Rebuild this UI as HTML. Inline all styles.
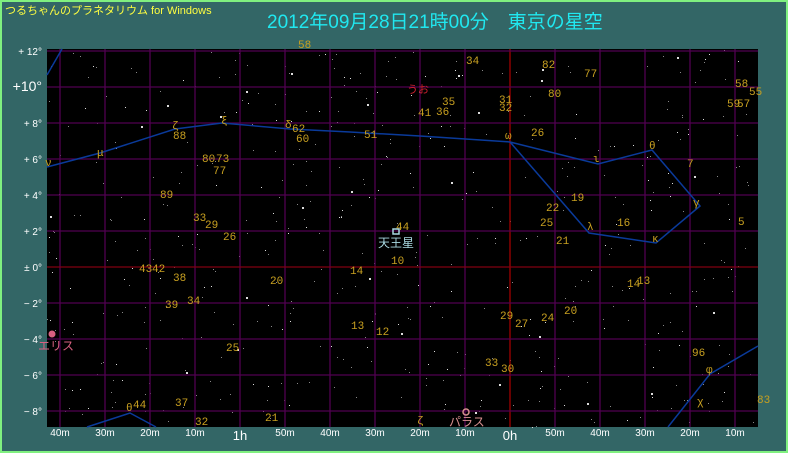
<!DOCTYPE html>
<html><head><meta charset="utf-8"><style>
html,body{margin:0;padding:0;}
body{width:788px;height:453px;overflow:hidden;background:#336666;font-family:"Liberation Sans","Noto Sans CJK JP",sans-serif;}
#wrap{position:absolute;left:0;top:0;width:784px;height:449px;border:2px solid #80f080;background:#336666;}
svg{position:absolute;left:0;top:0;}
</style></head><body>
<div id="wrap"></div>
<svg width="788" height="453" viewBox="0 0 788 453" font-family="Liberation Sans, Noto Sans CJK JP, sans-serif">
<text x="5" y="14" fill="#ffff40" font-size="11">つるちゃんのプラネタリウム for Windows</text>
<text x="267" y="28" fill="#20e8f0" font-size="19">2012年09月28日21時00分　東京の星空</text>
<rect x="47" y="49" width="711" height="378" fill="#000"/>
<g id="stars"></g>
<g stroke="#500050" stroke-width="1.3" id="grid"></g>
<g fill="none" stroke="#0a3a9a" stroke-width="1.5">
<polyline points="47,167 100,153 175,129 222,123 290,129 350,132 420,136 510,142"/>
<polyline points="510,142 598,164 652,150 700,206 656,243 589,233 510,142"/>
<polyline points="47,75 62,49"/>
<polyline points="87,427 130,413 156,427"/>
<polyline points="668,427 710,374 758,346"/>
</g>
<g fill="#c8a020" font-size="11" font-family="Liberation Mono, monospace" id="lab"></g>
<g fill="#fff" font-size="11" id="ax"></g>
<text x="378" y="247" fill="#a8d8e0" font-size="12">天王星</text>
<rect x="393" y="229" width="6" height="5" fill="none" stroke="#a8d8e0" stroke-width="1.5"/>
<text x="407" y="93" fill="#d02030" font-size="11">うお</text>
<text x="38" y="350" fill="#d86080" font-size="12">エリス</text>
<circle cx="52" cy="334" r="3.5" fill="#d86080"/>
<text x="449" y="426" fill="#d89090" font-size="12">パラス</text>
<circle cx="466" cy="412" r="3" fill="none" stroke="#d89090" stroke-width="1.5"/>
</svg>
<script>
var ns="http://www.w3.org/2000/svg";
function el(p,t,a,txt){var e=document.createElementNS(ns,t);for(var k in a)e.setAttribute(k,a[k]);if(txt)e.textContent=txt;document.getElementById(p).appendChild(e);return e;}
var s=12345;function r(){s=(s*16807)%2147483647;return s/2147483647;}
for(var i=0;i<520;i++){var x=47+r()*711,y=49+r()*378,b=r();el("stars","rect",{x:x.toFixed(0),y:y.toFixed(0),width:b>0.96?2:1,height:b>0.96?2:1,fill:b>0.7?"#ddd":"#888"});}
for(var k=0;k<16;k++){var x=60+45*k;el("grid","line",{x1:x,y1:49,x2:x,y2:427,stroke:x==510?"#a00000":"#500050"});}
for(var k=0;k<11;k++){var y=51+36*k;el("grid","line",{x1:47,y1:y,x2:758,y2:y,stroke:y==267?"#800010":"#500050"});}
var L=[[298,48,"58"],[466,64,"34"],[542,68,"82"],[584,77,"77"],[548,97,"80"],[735,87,"58"],[749,95,"55"],[727,107,"59"],[737,107,"57"],[442,105,"35"],[418,116,"41"],[436,115,"36"],[499,103,"31"],[499,111,"32"],[172,129,"ζ"],[173,139,"88"],[221,124,"ξ"],[285,128,"δ"],[292,132,"62"],[296,142,"60"],[364,138,"51"],[505,139,"ω"],[531,136,"26"],[649,149,"θ"],[45,166,"ν"],[97,156,"μ"],[202,162,"80"],[216,162,"73"],[213,174,"77"],[593,162,"ι"],[687,167,"7"],[160,198,"89"],[571,201,"19"],[693,206,"γ"],[193,221,"33"],[205,228,"29"],[546,211,"22"],[540,226,"25"],[617,226,"16"],[738,225,"5"],[223,240,"26"],[396,230,"44"],[587,230,"λ"],[556,244,"21"],[652,242,"κ"],[391,264,"10"],[139,272,"43"],[152,272,"42"],[350,274,"14"],[173,281,"38"],[270,284,"20"],[637,284,"13"],[627,287,"14"],[165,308,"39"],[187,304,"34"],[500,319,"29"],[564,314,"20"],[541,321,"24"],[515,327,"27"],[351,329,"13"],[376,335,"12"],[226,351,"25"],[692,356,"96"],[485,366,"33"],[501,372,"30"],[706,373,"φ"],[126,411,"θ"],[133,408,"44"],[175,406,"37"],[195,425,"32"],[265,421,"21"],[417,424,"ζ"],[697,405,"χ"],[757,403,"83"]];
L.forEach(function(a){el("lab","text",{x:a[0],y:a[1]},a[2]);});
var B=["40m","30m","20m","10m","1h","50m","40m","30m","20m","10m","0h","50m","40m","30m","20m","10m"];
B.forEach(function(t,k){var big=(t=="1h"||t=="0h");el("ax","text",{x:60+45*k,y:big?440:436,"text-anchor":"middle","font-size":big?13:10},t);});
var Y=["+ 12°","+10°","+ 8°","+ 6°","+ 4°","+ 2°","± 0°","− 2°","− 4°","− 6°","− 8°"];
Y.forEach(function(t,k){el("ax","text",{x:42,y:55+36*k,"text-anchor":"end","font-size":k==1?14:10},t);});
</script>
</body></html>
